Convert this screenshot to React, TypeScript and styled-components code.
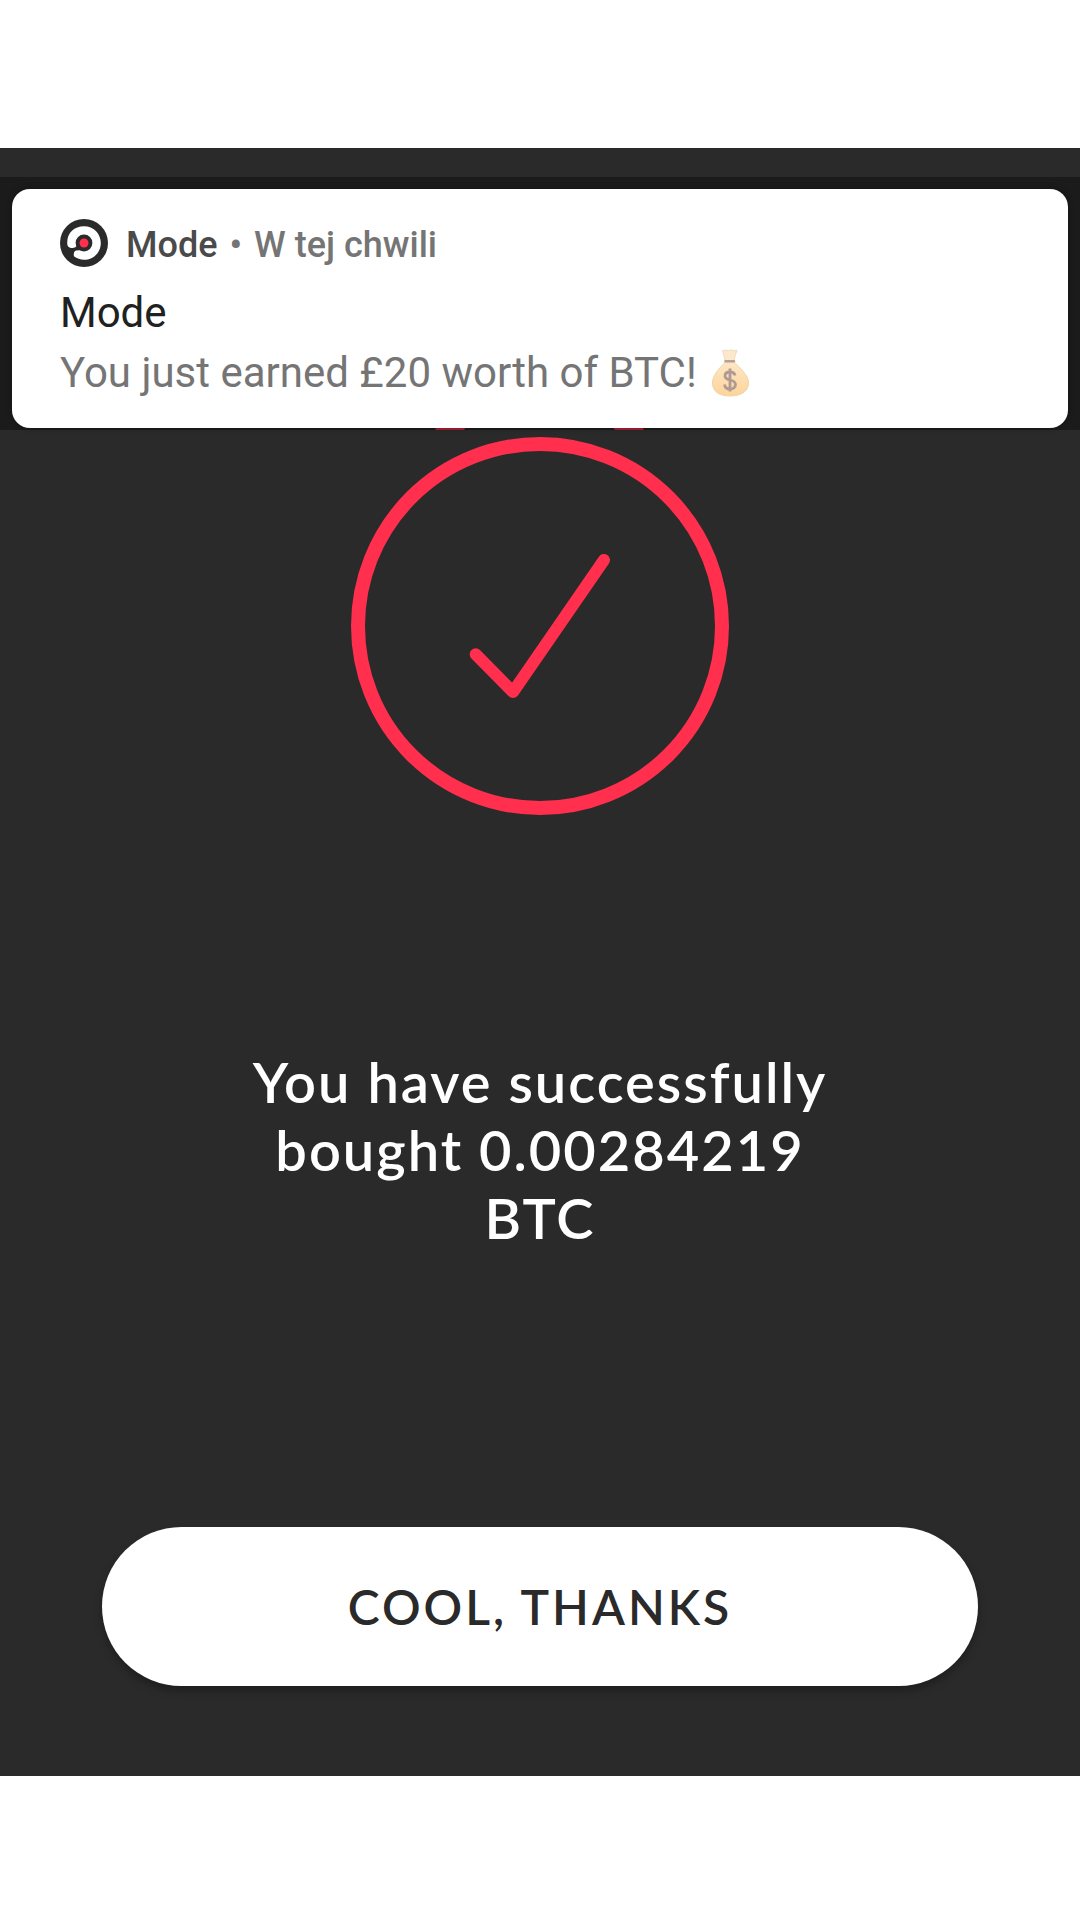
import React from "react";
import styled, { createGlobalStyle } from "styled-components";

const GlobalStyle = createGlobalStyle`
  *, *::before, *::after { box-sizing: border-box; }
  body { margin: 0; background: #ffffff; }
`;

const Page = styled.div`
  display: flex;
  flex-direction: column;
  min-height: 100vh;
  padding: 148px 0 144px;
`;

const Screen = styled.main`
  flex: 1;
  display: flex;
  flex-direction: column;
  align-items: center;
  padding: 29px 0 90px;
  background: #2a2a2a;
  color: #ffffff;
  font-family: Lato, "Noto Sans", sans-serif;
`;

const BannerScrim = styled.div`
  position: relative;
  z-index: 1;
  align-self: stretch;
  padding: 12px 12px 2px;
  background: rgba(0, 0, 0, 0.34);
`;

const Notification = styled.article`
  padding: 30px 48px 26px;
  border-radius: 18px;
  background: #ffffff;
  box-shadow: 0 0 6px rgba(0, 0, 0, 0.3);
  font-family: Roboto, "Noto Sans", sans-serif;
`;

const NotificationHeader = styled.header`
  display: flex;
  align-items: center;
  gap: 18px;
  height: 48px;
  color: #757575;
  font-size: 36px;
  font-weight: 500;
  line-height: 48px;
`;

const AppLine = styled.div`
  display: flex;
  gap: 12px;
  padding-top: 3px;
`;

const AppName = styled.span`
  color: #4a4a4a;
`;

const NotificationTitle = styled.h2`
  margin: 16px 0 0;
  color: #212121;
  font-size: 42px;
  font-weight: 400;
  line-height: 60px;
`;

const NotificationText = styled.p`
  display: flex;
  align-items: center;
  gap: 14px;
  margin: 0;
  color: #757575;
  font-size: 42px;
  line-height: 59px;
`;

const Illustration = styled.svg`
  display: block;
  flex: none;
  width: 378px;
  height: 416px;
  margin-top: -30px;
`;

const Message = styled.h1`
  max-width: 640px;
  margin: 232px 0 60px;
  font-size: 56px;
  font-weight: 600;
  line-height: 68px;
  letter-spacing: 2px;
  text-align: center;
`;

const Actions = styled.div`
  align-self: stretch;
  display: flex;
  margin-top: auto;
  padding: 0 102px;
`;

const PillButton = styled.button`
  flex: 1;
  height: 159px;
  border: 0;
  border-radius: 80px;
  background: #ffffff;
  box-shadow: 0 5px 8px rgba(0, 0, 0, 0.28);
  color: #2a2a2a;
  font-family: inherit;
  font-size: 48px;
  font-weight: 600;
  letter-spacing: 3px;
  text-transform: uppercase;
  cursor: pointer;
`;

function ModeLogo() {
  return (
    <svg width="48" height="48" viewBox="0 0 48 48" aria-hidden="true">
      <circle cx="24" cy="24" r="24" fill="#2a2a2a" />
      <path
        d="M7.4 26 C6 15 13.5 7.2 24 7.2 C33.5 7.2 40.8 14.5 40.8 24 C40.8 33.5 33.5 40.8 24 40.8 C20.3 40.8 16.8 39.6 14.2 37.6 C13.4 36.5 13.6 33 15.4 31.2 L18 30.2 L15.2 28.6 C12.5 29.6 8.2 29.2 7.4 26 Z"
        fill="#ffffff"
      />
      <circle cx="24" cy="24" r="8.4" fill="#2a2a2a" />
      <path d="M12 33.5 L14.5 29 L19 25 L23 31 L16 31.6 Z" fill="#2a2a2a" />
      <circle cx="24" cy="24" r="4.5" fill="#ff2f4d" />
    </svg>
  );
}

function MoneyBag() {
  return (
    <svg width="40" height="48" viewBox="0 0 40 48" role="img" aria-label="Money bag">
      <defs>
        <linearGradient id="bag" x1="0" y1="0" x2="0" y2="1">
          <stop offset="0" stopColor="#fde7c6" />
          <stop offset="1" stopColor="#fdd49a" />
        </linearGradient>
      </defs>
      <path
        d="M14 12 C13.5 8 12.5 5 11.5 1.8 L15 1 L17 2 L20 0.8 L23 1.8 L26 1.2 C24.8 5 23.5 8 23 12 Z"
        fill="#fce9cd"
        stroke="#efdcc0"
      />
      <path
        d="M14.5 13 H23 C29 19 37.5 26 37.5 34 C37.5 43 29 47 19 47 C9 47 1.5 43 1.5 34 C1.5 26 8.5 19 14.5 13 Z"
        fill="url(#bag)"
        stroke="#f1d4a6"
      />
      <path d="M14.5 12.3 H23" stroke="#b8a097" strokeWidth="2.4" strokeLinecap="round" />
      <path
        d="M24 26.5 C23.5 24 21.5 23 19 23 C16 23 14 24.5 14 27 C14 32.5 24.5 29.5 24.5 35.5 C24.5 38.5 22 40 19 40 C16 40 13.8 38.5 13.5 35.5 M19 19.5 V42.5"
        fill="none"
        stroke="#b09a94"
        strokeWidth="2.8"
      />
    </svg>
  );
}

function SuccessMark() {
  return (
    <Illustration viewBox="0 0 378 416" role="img" aria-label="Success">
      <g fill="#ff2f4d">
        <path d="M104 0 H134 L113 30 H84 Z" />
        <path d="M244 0 H274 L293 30 H264 Z" />
      </g>
      <g fill="none" stroke="#ff2f4d">
        <circle cx="189" cy="226" r="182" strokeWidth="14" />
        <path
          d="M124.7 254.3 L162 292 L253 160"
          strokeWidth="12"
          strokeLinecap="round"
          strokeLinejoin="round"
        />
      </g>
    </Illustration>
  );
}

export default function App() {
  return (
    <>
      <GlobalStyle />
      <Page>
        <Screen>
          <BannerScrim>
            <Notification>
              <NotificationHeader>
                <ModeLogo />
                <AppLine>
                  <AppName>Mode</AppName>
                  <span>•</span>
                  <span>W tej chwili</span>
                </AppLine>
              </NotificationHeader>
              <NotificationTitle>Mode</NotificationTitle>
              <NotificationText>
                You just earned £20 worth of BTC!
                <MoneyBag />
              </NotificationText>
            </Notification>
          </BannerScrim>
          <SuccessMark />
          <Message>You have successfully bought 0.00284219 BTC</Message>
          <Actions>
            <PillButton type="button">Cool, thanks</PillButton>
          </Actions>
        </Screen>
      </Page>
    </>
  );
}
